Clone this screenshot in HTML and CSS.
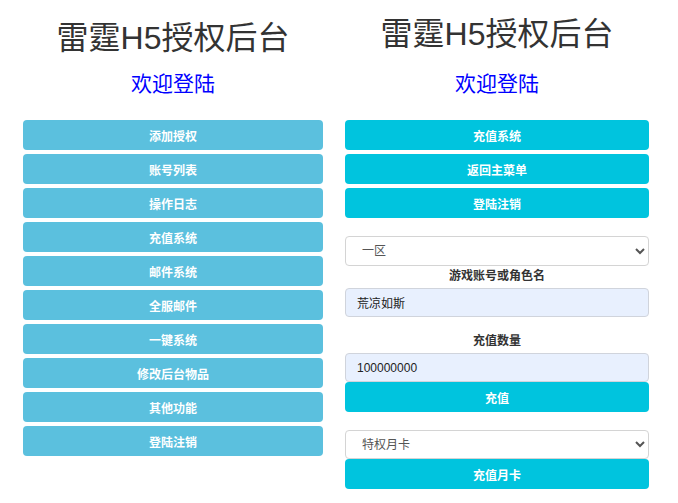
FILE: index.html
```html
<!DOCTYPE html>
<html lang="zh-CN">
<head>
<meta charset="utf-8">
<title>雷霆H5授权后台</title>
<link rel="stylesheet" href="styles.css">
</head>
<body>
<div class="page">
  <div class="panel panel-left">
    <h1 class="title title-left">雷霆H5授权后台</h1>
    <h2 class="welcome">欢迎登陆</h2>
    <div class="menu">
      <button class="btn btn-info">添加授权</button>
      <button class="btn btn-info">账号列表</button>
      <button class="btn btn-info">操作日志</button>
      <button class="btn btn-info">充值系统</button>
      <button class="btn btn-info">邮件系统</button>
      <button class="btn btn-info">全服邮件</button>
      <button class="btn btn-info">一键系统</button>
      <button class="btn btn-info">修改后台物品</button>
      <button class="btn btn-info">其他功能</button>
      <button class="btn btn-info">登陆注销</button>
    </div>
  </div>
  <div class="panel panel-right">
    <h1 class="title title-right">雷霆H5授权后台</h1>
    <h2 class="welcome">欢迎登陆</h2>
    <div class="menu">
      <button class="btn btn-cyan">充值系统</button>
      <button class="btn btn-cyan">返回主菜单</button>
      <button class="btn btn-cyan">登陆注销</button>
    </div>
    <form class="form">
      <select class="field select">
        <option>一区</option>
      </select>
      <label class="label">游戏账号或角色名</label>
      <input class="field input" type="text" value="荒凉如斯">
      <label class="label label-gap">充值数量</label>
      <input class="field input" type="text" value="100000000">
      <button type="button" class="btn btn-cyan btn-attached">充值</button>
      <select class="field select select-card">
        <option>特权月卡</option>
      </select>
      <button type="button" class="btn btn-cyan btn-attached">充值月卡</button>
    </form>
  </div>
</div>
</body>
</html>
```
FILE: styles.css
```css
html, body {
  margin: 0;
  padding: 0;
  background: #ffffff;
}
body {
  font-family: "Liberation Sans", "Noto Sans CJK SC", sans-serif;
  color: #333333;
}
.page {
  display: flex;
  align-items: flex-start;
}
.panel {
  display: flex;
  flex-direction: column;
  box-sizing: border-box;
}
.panel-left {
  width: 345px;
  padding: 0 22px 0 23px;
}
.panel-right {
  width: 304px;
}
.title {
  margin: 0;
  font-weight: normal;
  font-size: 32px;
  line-height: 40px;
  text-align: center;
  color: #333333;
  white-space: nowrap;
}
.title-left {
  padding-top: 18px;
}
.title-right {
  padding-top: 14px;
}
.welcome {
  margin: 0;
  font-weight: normal;
  font-size: 21px;
  line-height: 28px;
  text-align: center;
  color: #0000ff;
  font-family: "Noto Sans CJK SC", sans-serif;
}
.panel-left .welcome {
  margin-top: 10px;
}
.panel-right .welcome {
  margin-top: 14px;
}
.menu {
  display: flex;
  flex-direction: column;
  gap: 4px;
  margin-top: 24px;
}
.btn {
  display: block;
  width: 100%;
  height: 30px;
  border: 0;
  border-radius: 4px;
  padding: 0;
  color: #ffffff;
  font-family: "Noto Sans CJK SC", sans-serif;
  font-size: 12px;
  font-weight: bold;
  text-align: center;
  cursor: pointer;
}
.btn-info {
  background: #5bc0de;
}
.btn-cyan {
  background: #00c4de;
}
.form {
  display: flex;
  flex-direction: column;
  margin: 18px 0 0 0;
}
.field {
  box-sizing: border-box;
  width: 100%;
  height: 30px;
  border: 1px solid #d4d4d4;
  border-radius: 4px;
  font-family: "Liberation Sans", "Noto Sans CJK SC", sans-serif;
  font-size: 12px;
  margin: 0;
}
.select {
  background: #ffffff;
  color: #555555;
  padding: 0 0 0 12px;
}
.select-card {
  margin-top: 18px;
  height: 29px;
}
.input {
  background: #e8f0fe;
  color: #222222;
  padding: 0 11px;
  border-color: #d0d4dc;
  height: 29px;
}
.label {
  display: block;
  text-align: center;
  font-family: "Noto Sans CJK SC", sans-serif;
  font-size: 12px;
  font-weight: bold;
  line-height: 18px;
  color: #333333;
  margin: 0 0 4px 0;
}
.label-gap {
  margin-top: 14px;
}
.btn-attached {
  margin-top: 0;
}
```
